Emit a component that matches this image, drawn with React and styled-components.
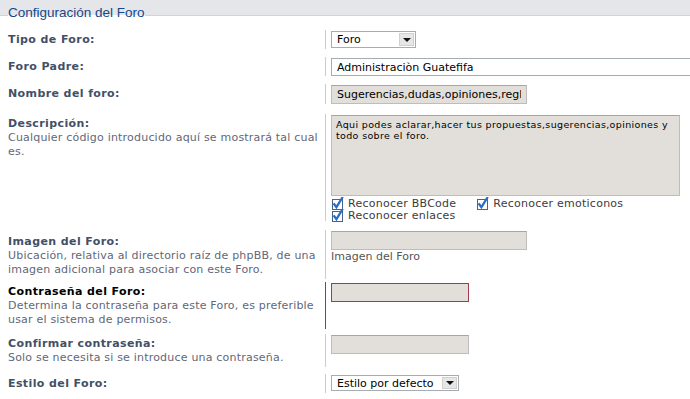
import React from 'react';
import styled, { createGlobalStyle } from 'styled-components';

const GlobalStyle = createGlobalStyle`
  html, body {
    margin: 0;
    padding: 0;
    background: #ffffff;
  }
  body {
    font-family: "DejaVu Sans", Verdana, sans-serif;
    overflow: hidden;
  }
  * {
    box-sizing: border-box;
  }
`;

const Page = styled.div`
  width: 690px;
  height: 399px;
  overflow: hidden;
  background: #e4e6e9;
  padding-top: 5px;
`;

const Fieldset = styled.fieldset`
  margin: 0;
  padding: 4px 0 0 0;
  min-width: 0;
  min-height: 420px;
  border: none;
  border-top: 1px solid #d0d3d7;
  background: #ffffff;
`;

const Legend = styled.legend`
  margin-left: 8px;
  padding: 0 0 5px 0;
  font-family: "Liberation Sans", Arial, sans-serif;
  font-size: 13.5px;
  line-height: 16px;
  color: #16488a;
`;

const Row = styled.div`
  display: grid;
  grid-template-columns: 326px 1fr;
  margin-bottom: ${(p) => p.$gap ?? 8}px;
`;

const Term = styled.div`
  padding: ${(p) => p.$top ?? 3}px 0 2px 8px;
  border-right: 1px solid ${(p) => (p.$active ? '#555555' : '#cccccc')};
`;

const Label = styled.div`
  font-size: 11px;
  line-height: 14px;
  font-weight: bold;
  letter-spacing: 0.4px;
  color: ${(p) => (p.$active ? '#000000' : '#425067')};
`;

const Explain = styled.div`
  font-size: 11px;
  line-height: 14px;
  letter-spacing: 0.2px;
  color: #5f6779;
`;

const Field = styled.div`
  padding: 1px 0 0 5px;
  min-width: 0;
`;

const TextInput = styled.input`
  display: block;
  width: ${(p) => p.$w}px;
  height: 19px;
  margin: 0;
  padding: 0 5px;
  font-family: "DejaVu Sans", Verdana, sans-serif;
  font-size: 11px;
  color: #000000;
  background: #e2dfda;
  border: 1px solid ${(p) => (p.$focus ? '#a3384f' : '#bdbdbd')};
  border-top-color: ${(p) => (p.$focus ? '#a3384f' : '#a6a6a6')};
  outline: none;
`;

const TextArea = styled.textarea`
  display: block;
  width: 349px;
  height: 81px;
  margin: 0;
  padding: 3px 4px;
  resize: none;
  overflow: hidden;
  font-family: "DejaVu Sans", Verdana, sans-serif;
  font-size: 9.5px;
  line-height: 11px;
  letter-spacing: 0.35px;
  color: #000000;
  background: #e2dfda;
  border: 1px solid #bdbdbd;
  border-top-color: #a6a6a6;
  outline: none;
`;

const Select = styled.div`
  display: flex;
  align-items: center;
  width: ${(p) => p.$w}px;
  height: ${(p) => p.$h}px;
  padding: 0 1px 0 5px;
  background: #ffffff;
  border: 1px solid #a5acb2;
  font-size: 11px;
  color: #000000;
  white-space: nowrap;
`;

const SelectText = styled.span`
  flex: 1;
  overflow: hidden;
`;

const Arrow = styled.span`
  width: 15px;
  height: ${(p) => p.$h}px;
  display: flex;
  align-items: center;
  justify-content: center;
  background: #e6e6e6;
  border: 1px solid #d0d0d0;
  &::after {
    content: '';
    border-left: 4px solid transparent;
    border-right: 4px solid transparent;
    border-top: 4px solid #111111;
  }
`;

const Checks = styled.div`
  display: flex;
  flex-direction: column;
  padding-top: 1px;
`;

const CheckLine = styled.div`
  display: flex;
  gap: 20px;
`;

const CheckLabel = styled.span`
  display: flex;
  align-items: center;
  height: 12px;
  font-size: 11px;
  letter-spacing: 0.25px;
  color: #3c3c3c;
  gap: 4px;
`;

const Note = styled.div`
  font-size: 11px;
  line-height: 13px;
  color: #555555;
`;

const CheckIcon = () => (
  <svg width="13" height="13" viewBox="0 0 13 13">
    <rect x="1.5" y="2.5" width="10" height="10" fill="#ffffff" stroke="#47648a" />
    <path d="M3.2 7.2 L5.4 10.2 L11.2 0.8" fill="none" stroke="#2b6cc4" strokeWidth="2.2" strokeLinecap="square" />
  </svg>
);

const Check = ({ children }) => (
  <CheckLabel>
    <CheckIcon />
    {children}
  </CheckLabel>
);

export default function App() {
  return (
    <Page>
      <GlobalStyle />
      <Fieldset>
        <Legend>Configuración del Foro</Legend>

        <Row>
          <Term>
            <Label>Tipo de Foro:</Label>
          </Term>
          <Field>
            <Select $w={85} $h={17}>
              <SelectText>Foro</SelectText>
              <Arrow $h={13} />
            </Select>
          </Field>
        </Row>

        <Row>
          <Term>
            <Label>Foro Padre:</Label>
          </Term>
          <Field>
            <Select $w={400} $h={18}>
              <SelectText>Administraciòn Guatefifa</SelectText>
            </Select>
          </Field>
        </Row>

        <Row $gap={10}>
          <Term>
            <Label>Nombre del foro:</Label>
          </Term>
          <Field>
            <TextInput $w={196} readOnly value="Sugerencias,dudas,opiniones,reglas" />
          </Field>
        </Row>

        <Row $gap={9}>
          <Term>
            <Label>Descripción:</Label>
            <Explain>Cualquier código introducido aquí se mostrará tal cual es.</Explain>
          </Term>
          <Field>
            <TextArea
              readOnly
              value="Aqui podes aclarar,hacer tus propuestas,sugerencias,opiniones y todo sobre el foro."
            />
            <Checks>
              <CheckLine>
                <Check>Reconocer BBCode</Check>
                <Check>Reconocer emoticonos</Check>
              </CheckLine>
              <CheckLine>
                <Check>Reconocer enlaces</Check>
              </CheckLine>
            </Checks>
          </Field>
        </Row>

        <Row $gap={3}>
          <Term $top={5}>
            <Label>Imagen del Foro:</Label>
            <Explain>
              Ubicación, relativa al directorio raíz de phpBB, de una imagen adicional para asociar con este Foro.
            </Explain>
          </Term>
          <Field>
            <TextInput $w={196} readOnly value="" />
            <Note>Imagen del Foro</Note>
          </Field>
        </Row>

        <Row $gap={5}>
          <Term $active>
            <Label $active>Contraseña del Foro:</Label>
            <Explain>
              Determina la contraseña para este Foro, es preferible usar el sistema de permisos.
            </Explain>
          </Term>
          <Field>
            <TextInput $w={138} $focus readOnly value="" />
          </Field>
        </Row>

        <Row $gap={7}>
          <Term>
            <Label>Confirmar contraseña:</Label>
            <Explain>Solo se necesita si se introduce una contraseña.</Explain>
          </Term>
          <Field>
            <TextInput $w={138} readOnly value="" />
          </Field>
        </Row>

        <Row>
          <Term>
            <Label>Estilo del Foro:</Label>
          </Term>
          <Field>
            <Select $w={128} $h={16}>
              <SelectText>Estilo por defecto</SelectText>
              <Arrow $h={12} />
            </Select>
          </Field>
        </Row>
      </Fieldset>
    </Page>
  );
}
